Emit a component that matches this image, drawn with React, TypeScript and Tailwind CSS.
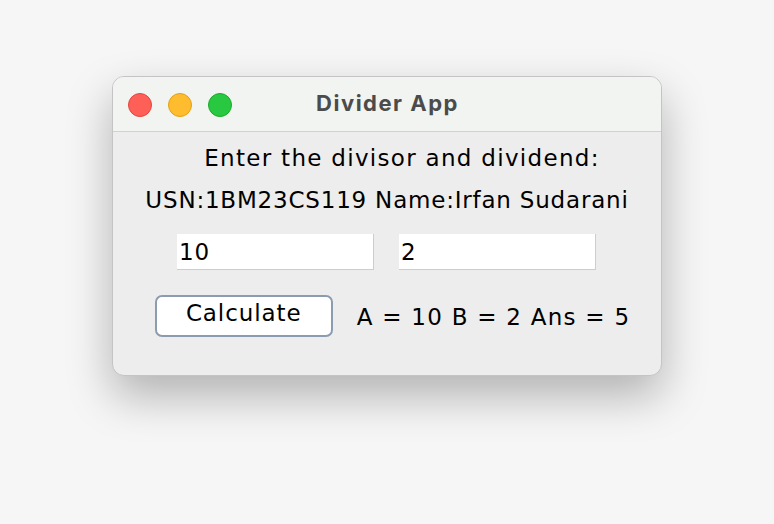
import React from "react";

export default function App() {
  const body = { fontFamily: '"DejaVu Sans", "Lucida Grande", Verdana, sans-serif' } as React.CSSProperties;
  return (
    <div className="w-[774px] h-[524px] bg-[#f6f6f6] pt-[76px] pl-[112px]">
      <div className="w-[550px] h-[300px] rounded-[12px] bg-[#ededed] border border-[#c4c4c4] shadow-[0_20px_45px_rgba(0,0,0,0.28)] overflow-hidden flex flex-col">
        <div className="h-[55px] bg-[#f2f4f1] border-b border-[#d2d2d2] flex items-center relative shrink-0">
          <div className="flex items-center gap-[16px] pl-[15px] pt-[1px]">
            <div className="w-[24px] h-[24px] rounded-full bg-[#fe5f57] border border-[#e2463f]" />
            <div className="w-[24px] h-[24px] rounded-full bg-[#febc2e] border border-[#e1a116]" />
            <div className="w-[24px] h-[24px] rounded-full bg-[#28c840] border border-[#1aab29]" />
          </div>
          <div className="absolute inset-0 flex items-center justify-center pl-[1px] pb-[1px] text-[22px] font-bold tracking-[1.5px] text-[#4b4b4b]" style={{ fontFamily: 'Inter, "Open Sans", sans-serif' }}>
            Divider App
          </div>
        </div>
        <div className="flex flex-col items-center text-[23px] text-black" style={body}>
          <div className="mt-[12px] h-[28px] leading-[28px] pl-[30px] tracking-[1.3px] whitespace-nowrap">Enter the divisor and dividend:</div>
          <div className="mt-[14px] h-[28px] leading-[28px] tracking-[0.8px] whitespace-nowrap">USN:1BM23CS119 Name:Irfan Sudarani</div>
          <div className="mt-[20px] flex gap-[25px] pr-[1px]">
            <div className="w-[197px] h-[36px] bg-white border-b border-r border-[#cdcdcd] flex items-center pl-[2px] leading-[28px] tracking-[0.8px]">10</div>
            <div className="w-[197px] h-[36px] bg-white border-b border-r border-[#cdcdcd] flex items-center pl-[2px] leading-[28px] tracking-[0.8px]">2</div>
          </div>
          <div className="mt-[25px] flex items-center gap-[24px] pl-[11px]">
            <div className="w-[178px] h-[42px] rounded-[7px] bg-white border-[2px] border-[#8c9cb0] flex items-center justify-center pb-[6px] leading-[28px] tracking-[0.9px]">Calculate</div>
            <div className="mt-[2px] leading-[28px] tracking-[1.25px] whitespace-nowrap">A = 10 B = 2 Ans = 5</div>
          </div>
        </div>
      </div>
    </div>
  );
}
